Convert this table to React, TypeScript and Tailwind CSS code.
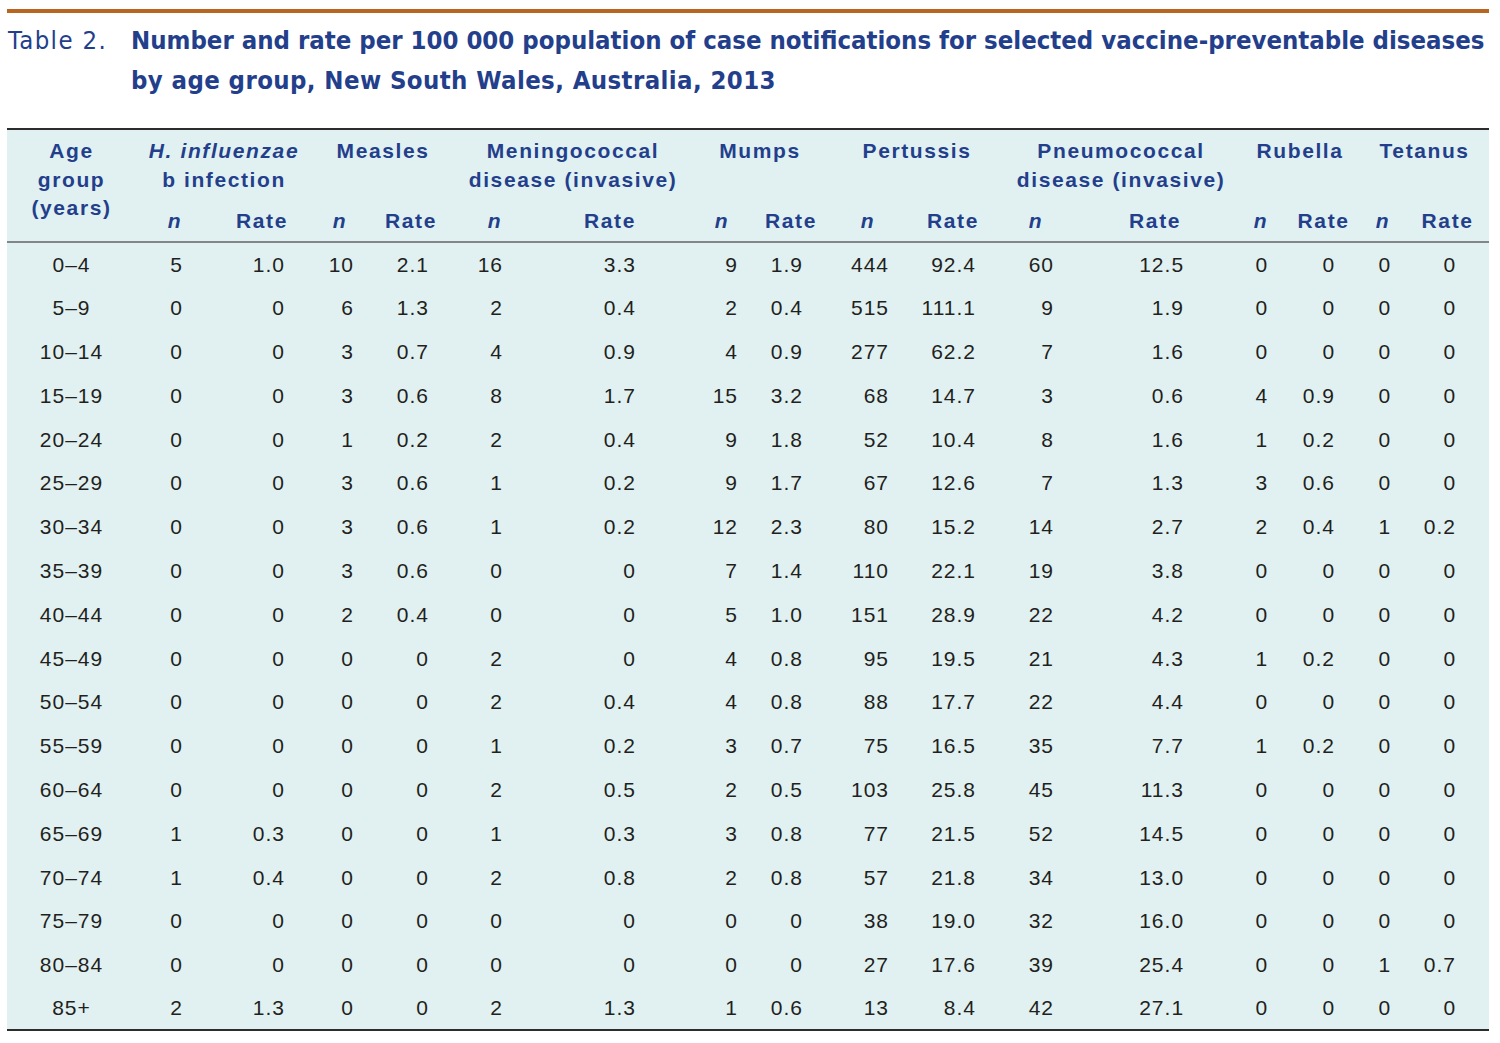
const rows: string[][] = [
  ['0–4', '5', '1.0', '10', '2.1', '16', '3.3', '9', '1.9', '444', '92.4', '60', '12.5', '0', '0', '0', '0'],
  ['5–9', '0', '0', '6', '1.3', '2', '0.4', '2', '0.4', '515', '111.1', '9', '1.9', '0', '0', '0', '0'],
  ['10–14', '0', '0', '3', '0.7', '4', '0.9', '4', '0.9', '277', '62.2', '7', '1.6', '0', '0', '0', '0'],
  ['15–19', '0', '0', '3', '0.6', '8', '1.7', '15', '3.2', '68', '14.7', '3', '0.6', '4', '0.9', '0', '0'],
  ['20–24', '0', '0', '1', '0.2', '2', '0.4', '9', '1.8', '52', '10.4', '8', '1.6', '1', '0.2', '0', '0'],
  ['25–29', '0', '0', '3', '0.6', '1', '0.2', '9', '1.7', '67', '12.6', '7', '1.3', '3', '0.6', '0', '0'],
  ['30–34', '0', '0', '3', '0.6', '1', '0.2', '12', '2.3', '80', '15.2', '14', '2.7', '2', '0.4', '1', '0.2'],
  ['35–39', '0', '0', '3', '0.6', '0', '0', '7', '1.4', '110', '22.1', '19', '3.8', '0', '0', '0', '0'],
  ['40–44', '0', '0', '2', '0.4', '0', '0', '5', '1.0', '151', '28.9', '22', '4.2', '0', '0', '0', '0'],
  ['45–49', '0', '0', '0', '0', '2', '0', '4', '0.8', '95', '19.5', '21', '4.3', '1', '0.2', '0', '0'],
  ['50–54', '0', '0', '0', '0', '2', '0.4', '4', '0.8', '88', '17.7', '22', '4.4', '0', '0', '0', '0'],
  ['55–59', '0', '0', '0', '0', '1', '0.2', '3', '0.7', '75', '16.5', '35', '7.7', '1', '0.2', '0', '0'],
  ['60–64', '0', '0', '0', '0', '2', '0.5', '2', '0.5', '103', '25.8', '45', '11.3', '0', '0', '0', '0'],
  ['65–69', '1', '0.3', '0', '0', '1', '0.3', '3', '0.8', '77', '21.5', '52', '14.5', '0', '0', '0', '0'],
  ['70–74', '1', '0.4', '0', '0', '2', '0.8', '2', '0.8', '57', '21.8', '34', '13.0', '0', '0', '0', '0'],
  ['75–79', '0', '0', '0', '0', '0', '0', '0', '0', '38', '19.0', '32', '16.0', '0', '0', '0', '0'],
  ['80–84', '0', '0', '0', '0', '0', '0', '0', '0', '27', '17.6', '39', '25.4', '0', '0', '1', '0.7'],
  ['85+', '2', '1.3', '0', '0', '2', '1.3', '1', '0.6', '13', '8.4', '42', '27.1', '0', '0', '0', '0'],
];

// column widths (px), 17 columns
const widths = [133, 70, 98, 64, 86, 74, 156, 68, 76, 72, 98, 68, 170, 42, 78, 46, 83];

// per-column alignment for the body figures
const cellPad = [
  'text-center pr-[4px]',
  'text-right pr-[27px]',
  'text-right pr-[23px]',
  'text-right pr-[18px]',
  'text-right pr-[29px]',
  'text-right pr-[29px]',
  'text-right pr-[52px]',
  'text-right pr-[18px]',
  'text-right pr-[29px]',
  'text-right pr-[15px]',
  'text-right pr-[26px]',
  'text-right pr-[16px]',
  'text-right pr-[56px]',
  'text-right pr-[14px]',
  'text-right pr-[25px]',
  'text-right pr-[15px]',
  'text-right pr-[33px]',
];

// small nudges so "Rate" sits where the reference puts it
const rateShift = ['pl-[6px]', 'pr-[8px]', '', 'pr-[6px]', '', '', 'pl-[5px]', ''];

const groups: { l1: React.ReactNode; l2?: string }[] = [
  { l1: <i>H. influenzae</i>, l2: 'b infection' },
  { l1: 'Measles' },
  { l1: 'Meningococcal', l2: 'disease (invasive)' },
  { l1: 'Mumps' },
  { l1: 'Pertussis' },
  { l1: 'Pneumococcal', l2: 'disease (invasive)' },
  { l1: 'Rubella' },
  { l1: 'Tetanus' },
];

export default function App() {
  return (
    <div className="min-h-[1043px] bg-white pt-[9px] pl-[7px]">
      <div className="w-[1482px]">
        <div className="h-[4px] bg-[#b9651f]" />

        <div
          className="mt-[7px] flex text-[25.5px] leading-[40px] text-[#233f8c]"
          style={{ fontFamily: "'Liberation Sans Narrow', 'DejaVu Sans Condensed', 'Liberation Sans', sans-serif" }}
        >
          <div className="w-[124px] shrink-0 pl-[1px] tracking-[1.4px]">Table 2.</div>
          <div className="font-bold">
            <div className="whitespace-nowrap">
              Number and rate per 100 000 population of case notifications for selected vaccine-preventable diseases
            </div>
            <div className="tracking-[0.4px]">by age group, New South Wales, Australia, 2013</div>
          </div>
        </div>

        <table
          className="mt-[28px] w-[1482px] table-fixed border-collapse bg-[#e1f1f1]"
          style={{ fontFamily: "'Liberation Sans', Arial, sans-serif" }}
        >
          <colgroup>
            {widths.map((w, i) => (
              <col key={i} style={{ width: w }} />
            ))}
          </colgroup>
          <thead className="text-[21px] font-bold leading-[28.5px] tracking-[1.6px] text-[#233f8c]">
            <tr className="border-t-2 border-[#2c2c2c]">
              <th rowSpan={2} className="pt-[7px] pr-[4px] align-top font-bold">
                Age
                <br />
                group
                <br />
                (years)
              </th>
              {groups.map((g, i) => (
                <th key={i} colSpan={2} className="h-[71px] pt-[7px] align-top font-bold">
                  <div>{g.l1}</div>
                  {g.l2 && <div>{g.l2}</div>}
                </th>
              ))}
            </tr>
            <tr className="border-b-2 border-[#80868a]">
              {groups.map((_, i) => [
                <th key={`n${i}`} className="h-[42px] pt-[2px] align-middle font-bold italic">
                  n
                </th>,
                <th key={`r${i}`} className={`h-[42px] pt-[2px] align-middle font-bold ${rateShift[i]}`}>
                  Rate
                </th>,
              ])}
            </tr>
          </thead>
          <tbody className="text-[21px] leading-[24px] tracking-[1px] text-[#231f20]">
            {rows.map((r, ri) => (
              <tr key={ri} className={ri === rows.length - 1 ? 'h-[43.8px] border-b-2 border-[#2c2c2c]' : 'h-[43.8px]'}>
                {r.map((v, ci) => (
                  <td key={ci} className={`p-0 pt-[1px] align-middle ${cellPad[ci]}`}>
                    {v}
                  </td>
                ))}
              </tr>
            ))}
          </tbody>
        </table>
      </div>
    </div>
  );
}
